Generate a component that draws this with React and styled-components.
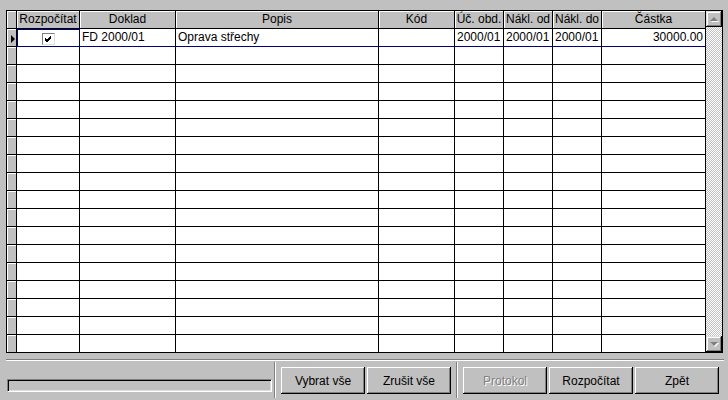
import React from "react"
import styled, { createGlobalStyle } from "styled-components"

const GlobalStyle = createGlobalStyle`
  html, body {
    margin: 0;
    padding: 0;
    background: #c0c0c0;
  }
  body {
    font-family: "Liberation Sans", Arial, sans-serif;
    font-size: 12px;
    font-weight: 400;
    color: #000;
  }
`

const COLUMNS = [
  { key: "ind", width: 10 },
  { key: "check", title: "Rozpočítat", width: 63 },
  { key: "doklad", title: "Doklad", width: 96 },
  { key: "popis", title: "Popis", width: 203 },
  { key: "kod", title: "Kód", width: 76 },
  { key: "obd", title: "Úč. obd.", width: 49 },
  { key: "od", title: "Nákl. od", width: 49 },
  { key: "do", title: "Nákl. do", width: 49 },
  { key: "castka", title: "Částka", width: 104, align: "right" },
]

const TEMPLATE = COLUMNS.map((c) => c.width + "px").join(" ")
const ROW_COUNT = 18

const ROWS = [
  {
    check: true,
    doklad: "FD 2000/01",
    popis: "Oprava střechy",
    kod: "",
    obd: "2000/01",
    od: "2000/01",
    do: "2000/01",
    castka: "30000.00",
  },
]

// markup
const App = () => {
  const rows = Array.from({ length: ROW_COUNT }, (_, i) => ROWS[i] || null)

  return (
    <Page>
      <GlobalStyle />
      <Grid>
        <Table>
          <HeaderRow>
            {COLUMNS.map((c) => (
              <HeadCell key={c.key}>{c.title}</HeadCell>
            ))}
          </HeaderRow>
          {rows.map((row, i) => (
            <Row key={i}>
              <IndicatorCell>{i === 0 && <Pointer />}</IndicatorCell>
              {COLUMNS.slice(1).map((c) => (
                <Cell
                  key={c.key}
                  $align={c.align}
                  $selected={i === 0}
                  $focused={i === 0 && c.key === "check"}
                >
                  {row && c.key === "check" && row.check && (
                    <CheckBox>
                      <svg width="9" height="9" viewBox="0 0 9 9">
                        <path
                          d="M1 3 L3 5 L7 1 M1 4 L3 6 L7 2 M1 5 L3 7 L7 3"
                          stroke="#000"
                          strokeWidth="1"
                          fill="none"
                          shapeRendering="crispEdges"
                        />
                      </svg>
                    </CheckBox>
                  )}
                  {row && c.key !== "check" && row[c.key]}
                </Cell>
              ))}
            </Row>
          ))}
        </Table>
        <ScrollBar>
          <ScrollButton>
            <Arrow $up />
          </ScrollButton>
          <ScrollButton>
            <Arrow />
          </ScrollButton>
        </ScrollBar>
      </Grid>
      <BottomBar>
        <ProgressPanel>
          <Progress />
        </ProgressPanel>
        <Divider />
        <ButtonGroup>
          <Button>Vybrat vše</Button>
          <Button>Zrušit vše</Button>
        </ButtonGroup>
        <Divider />
        <ButtonGroup>
          <Button disabled>Protokol</Button>
          <Button>Rozpočítat</Button>
          <Button>Zpět</Button>
        </ButtonGroup>
      </BottomBar>
    </Page>
  )
}

//Layout
const Page = styled.div`
  width: 718px;
  padding: 10px 0 0 6px;
`

const Grid = styled.div`
  box-sizing: border-box;
  width: 717px;
  height: 343px;
  border: 1px solid #000;
  display: flex;
  overflow: hidden;
`

const Table = styled.div`
  width: 699px;
  height: 341px;
  overflow: hidden;
  background: #fff;
`

const HeaderRow = styled.div`
  display: grid;
  grid-template-columns: ${TEMPLATE};
  height: 18px;
`

const Row = styled.div`
  display: grid;
  grid-template-columns: ${TEMPLATE};
  height: 18px;
`

const HeadCell = styled.div`
  box-sizing: border-box;
  height: 18px;
  background: #c0c0c0;
  border-right: 1px solid #000;
  border-bottom: 1px solid #000;
  box-shadow: inset 1px 1px #fff;
  line-height: 17px;
  font-weight: 400;
  text-align: center;
  white-space: nowrap;
  overflow: hidden;
`

const IndicatorCell = styled.div`
  box-sizing: border-box;
  height: 18px;
  background: #c0c0c0;
  border-right: 1px solid #000;
  border-bottom: 1px solid #000;
  box-shadow: inset 1px 1px #fff;
  display: flex;
  align-items: center;
  padding: 2px 0 0 4px;
`

const Pointer = styled.span`
  width: 0;
  height: 0;
  border-left: 4px solid #000;
  border-top: 4px solid transparent;
  border-bottom: 4px solid transparent;
`

const Cell = styled.div`
  box-sizing: border-box;
  height: 18px;
  border-right: 1px solid ${(p) => (p.$focused ? "#000080" : "#000")};
  border-bottom: 1px solid ${(p) => (p.$selected ? "#000080" : "#000")};
  box-shadow: ${(p) => (p.$focused ? "inset 1px 1px #000080" : "none")};
  padding: 0 2px;
  line-height: 17px;
  text-align: ${(p) => p.$align || "left"};
  white-space: nowrap;
  overflow: hidden;
  display: ${(p) => (p.$focused ? "flex" : "block")};
  justify-content: center;
  align-items: center;
`

const CheckBox = styled.span`
  box-sizing: border-box;
  width: 13px;
  height: 12px;
  margin-top: 3px;
  border: 1px solid #808080;
  border-right-color: #dfdfdf;
  border-bottom-color: #dfdfdf;
  background: #fff;
  display: flex;
  align-items: center;
  justify-content: center;

  svg {
    display: block;
  }
`

const ScrollBar = styled.div`
  width: 16px;
  height: 341px;
  display: flex;
  flex-direction: column;
  justify-content: space-between;
  background: repeating-conic-gradient(#fff 0 25%, #c0c0c0 0 50%) 0 0 / 2px 2px;
`

const ScrollButton = styled.div`
  box-sizing: border-box;
  width: 16px;
  height: 16px;
  background: #c0c0c0;
  box-shadow: inset -1px -1px #000, inset 1px 1px #dfdfdf, inset -2px -2px #808080, inset 2px 2px #fff;
  display: flex;
  align-items: center;
  justify-content: center;
`

const Arrow = styled.span`
  width: 0;
  height: 0;
  border-left: 4px solid transparent;
  border-right: 4px solid transparent;
  ${(p) => (p.$up ? "border-bottom" : "border-top")}: 4px solid #808080;
  filter: drop-shadow(1px 1px 0 #fff);
`

const BottomBar = styled.div`
  margin-top: 6px;
  width: 718px;
  height: 41px;
  box-sizing: border-box;
  border-top: 1px solid #808080;
  box-shadow: inset 0 1px #fff;
  display: flex;
  align-items: flex-start;
  padding-top: 2px;
`

const ProgressPanel = styled.div`
  width: 273px;
  padding: 17px 0 0 1px;
  box-sizing: border-box;
`

const Progress = styled.div`
  box-sizing: border-box;
  width: 265px;
  height: 13px;
  border-top: 1px solid #808080;
  border-left: 1px solid #808080;
  border-right: 1px solid #fff;
  border-bottom: 1px solid #fff;
  box-shadow: inset 1px 1px #000, inset -1px -1px #dfdfdf;
`

const Divider = styled.div`
  box-sizing: border-box;
  width: 2px;
  height: 36px;
  border-left: 1px solid #808080;
  border-right: 1px solid #fff;
`

const ButtonGroup = styled.div`
  display: flex;
  gap: 2px;
  padding: 5px 5px 0 5px;
`

const Button = styled.button`
  box-sizing: border-box;
  width: 84px;
  height: 27px;
  margin: 0;
  padding: 0;
  border: none;
  background: #c0c0c0;
  box-shadow: inset -1px -1px #000, inset 1px 1px #fff, inset -2px -2px #808080;
  font-family: "Liberation Sans", Arial, sans-serif;
  font-size: 12px;
  font-weight: 400;
  color: #000;

  &:disabled {
    color: #808080;
    text-shadow: 1px 1px 0 #fff;
  }
`

export default App
